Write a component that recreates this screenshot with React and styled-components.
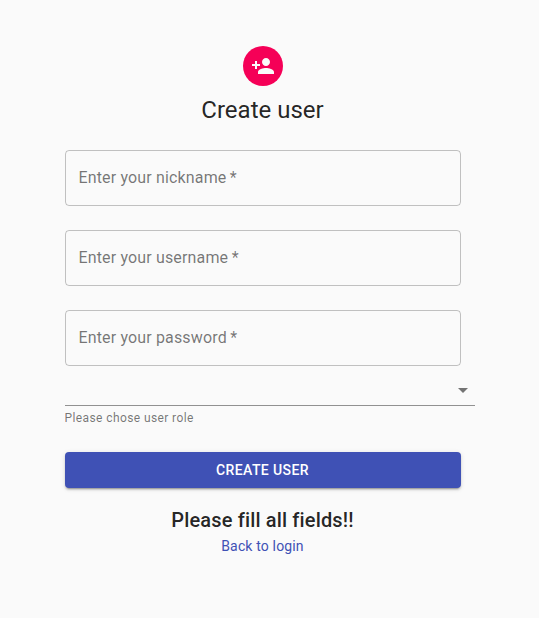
import React from "react";
import styled, { createGlobalStyle } from "styled-components";

const GlobalStyle = createGlobalStyle`
  *, *::before, *::after { box-sizing: border-box; }
  body {
    margin: 0;
    background: #fafafa;
    color: rgba(0, 0, 0, 0.87);
    font-family: Roboto, sans-serif;
    -webkit-font-smoothing: antialiased;
  }
`;

const Page = styled.main`
  width: 396px;
  margin-left: 64.5px;
  padding-top: 46px;
  display: flex;
  flex-direction: column;
  align-items: center;
`;

const Avatar = styled.div`
  width: 40px;
  height: 40px;
  border-radius: 50%;
  background: #f50057;
  color: #fafafa;
  display: flex;
  align-items: center;
  justify-content: center;
  margin-bottom: 8px;

  svg {
    width: 24px;
    height: 24px;
    fill: currentColor;
  }
`;

const Title = styled.h1`
  margin: 0 0 24px;
  font-size: 24px;
  font-weight: 400;
  line-height: 32px;
`;

const Form = styled.form`
  width: 100%;
  display: flex;
  flex-direction: column;
`;

const Field = styled.label`
  height: 56px;
  margin-bottom: ${({ $gap }) => $gap}px;
  padding: 0 13px 1px;
  border: 1px solid rgba(0, 0, 0, 0.23);
  border-radius: 4px;
  display: flex;
  align-items: center;
  font-size: 16px;
  letter-spacing: 0.15px;
  color: rgba(0, 0, 0, 0.54);
  white-space: pre;
`;

const Select = styled.div`
  width: 410px;
  height: 40px;
  border-bottom: 1px solid rgba(0, 0, 0, 0.42);
  display: flex;
  align-items: center;
  justify-content: flex-end;
  padding-top: 9px;

  svg {
    width: 24px;
    height: 24px;
    fill: rgba(0, 0, 0, 0.54);
  }
`;

const Helper = styled.p`
  margin: 2px 0 0;
  font-size: 12px;
  line-height: 20px;
  letter-spacing: 0.4px;
  color: rgba(0, 0, 0, 0.54);
`;

const Submit = styled.button`
  height: 36px;
  margin: 24px 0 16px;
  border: 0;
  border-radius: 4px;
  background: #3f51b5;
  color: #fff;
  font: 500 14px/24px Roboto, sans-serif;
  letter-spacing: 0.4px;
  text-transform: uppercase;
  box-shadow: 0 3px 1px -2px rgba(0, 0, 0, 0.2),
    0 2px 2px 0 rgba(0, 0, 0, 0.14), 0 1px 5px 0 rgba(0, 0, 0, 0.12);
`;

const Message = styled.h2`
  margin: 0;
  font-size: 20px;
  font-weight: 500;
  line-height: 32px;
  letter-spacing: 0.15px;
`;

const LoginLink = styled.a`
  font-size: 14px;
  line-height: 20px;
  letter-spacing: 0.15px;
  color: #3f51b5;
  text-decoration: none;
`;

const fields = [
  { label: "Enter your nickname", gap: 24 },
  { label: "Enter your username", gap: 24 },
  { label: "Enter your password", gap: 0 },
];

export default function App() {
  return (
    <>
      <GlobalStyle />
      <Page>
        <Avatar>
          <svg viewBox="0 0 24 24">
            <path d="M15 12c2.210 0 4-1.790 4-4s-1.790-4-4-4-4 1.790-4 4 1.790 4 4 4zm-9-2V7H4v3H1v2h3v3h2v-3h3v-2H6zm9 4c-2.670 0-8 1.340-8 4v2h16v-2c0-2.660-5.330-4-8-4z" />
          </svg>
        </Avatar>
        <Title>Create user</Title>
        <Form>
          {fields.map(({ label, gap }) => (
            <Field key={label} $gap={gap}>{`${label}\u2009*`}</Field>
          ))}
          <Select>
            <svg viewBox="0 0 24 24">
              <path d="M7 10l5 5 5-5z" />
            </svg>
          </Select>
          <Helper>Please chose user role</Helper>
          <Submit type="button">Create user</Submit>
        </Form>
        <Message>Please fill all fields!!</Message>
        <LoginLink href="#">Back to login</LoginLink>
      </Page>
    </>
  );
}
